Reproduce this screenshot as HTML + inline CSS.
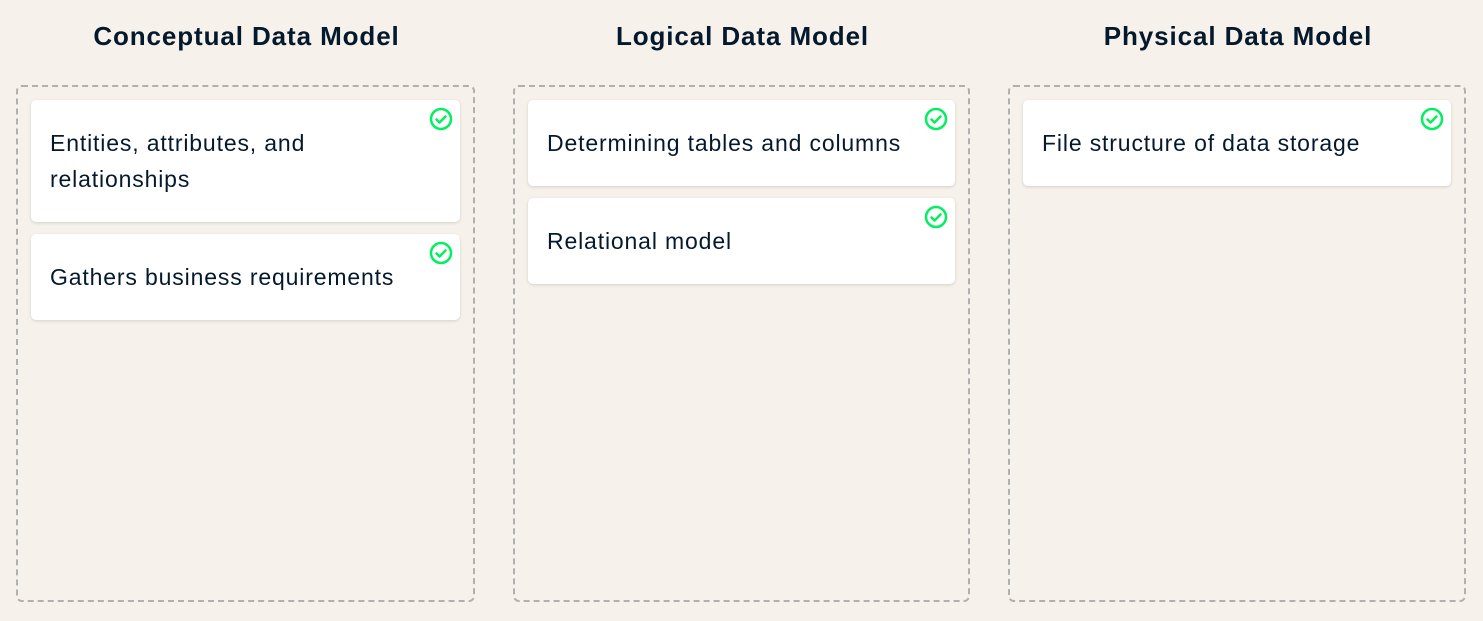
<!DOCTYPE html>
<html><head><style>
body{margin:0;width:1483px;height:621px;background:#f6f2eb;font-family:"Liberation Sans",sans-serif;color:#05192d;position:relative;overflow:hidden}
.h{position:absolute;top:21px;font-size:26px;font-weight:bold;text-align:center;letter-spacing:0.9px}
.box{position:absolute;top:85px;height:513px;border:2px dashed #b0b0b0;border-radius:6px}
.card{position:absolute;left:13px;right:13px;background:#fff;border-radius:5px;box-shadow:0 1px 3px rgba(0,0,0,.15);padding:25px 19px;font-size:23px;line-height:36px;letter-spacing:0.85px}
.card svg{position:absolute;right:7px;top:7px}
</style></head><body>
<div class="h" style="left:16px;width:461px">Conceptual Data Model</div>
<div class="h" style="left:513px;width:459px">Logical Data Model</div>
<div class="h" style="left:1008px;width:460px">Physical Data Model</div>
<div class="box" style="left:16px;width:455px">
 <div class="card" style="top:13px;height:72px">Entities, attributes, and<br>relationships<svg width="24" height="24" viewBox="0 0 24 24"><circle cx="12" cy="12" r="10" fill="none" stroke="#03ef62" stroke-width="2.5"/><path d="M7.5 12.5l3 3 6-6" fill="none" stroke="#03ef62" stroke-width="2.5" stroke-linecap="round" stroke-linejoin="round"/></svg></div>
 <div class="card" style="top:147px;height:36px">Gathers business requirements<svg width="24" height="24" viewBox="0 0 24 24"><circle cx="12" cy="12" r="10" fill="none" stroke="#03ef62" stroke-width="2.5"/><path d="M7.5 12.5l3 3 6-6" fill="none" stroke="#03ef62" stroke-width="2.5" stroke-linecap="round" stroke-linejoin="round"/></svg></div>
</div>
<div class="box" style="left:513px;width:453px">
 <div class="card" style="top:13px;height:36px">Determining tables and columns<svg width="24" height="24" viewBox="0 0 24 24"><circle cx="12" cy="12" r="10" fill="none" stroke="#03ef62" stroke-width="2.5"/><path d="M7.5 12.5l3 3 6-6" fill="none" stroke="#03ef62" stroke-width="2.5" stroke-linecap="round" stroke-linejoin="round"/></svg></div>
 <div class="card" style="top:111px;height:36px">Relational model<svg width="24" height="24" viewBox="0 0 24 24"><circle cx="12" cy="12" r="10" fill="none" stroke="#03ef62" stroke-width="2.5"/><path d="M7.5 12.5l3 3 6-6" fill="none" stroke="#03ef62" stroke-width="2.5" stroke-linecap="round" stroke-linejoin="round"/></svg></div>
</div>
<div class="box" style="left:1008px;width:454px">
 <div class="card" style="top:13px;height:36px">File structure of data storage<svg width="24" height="24" viewBox="0 0 24 24"><circle cx="12" cy="12" r="10" fill="none" stroke="#03ef62" stroke-width="2.5"/><path d="M7.5 12.5l3 3 6-6" fill="none" stroke="#03ef62" stroke-width="2.5" stroke-linecap="round" stroke-linejoin="round"/></svg></div>
</div>
</body></html>
